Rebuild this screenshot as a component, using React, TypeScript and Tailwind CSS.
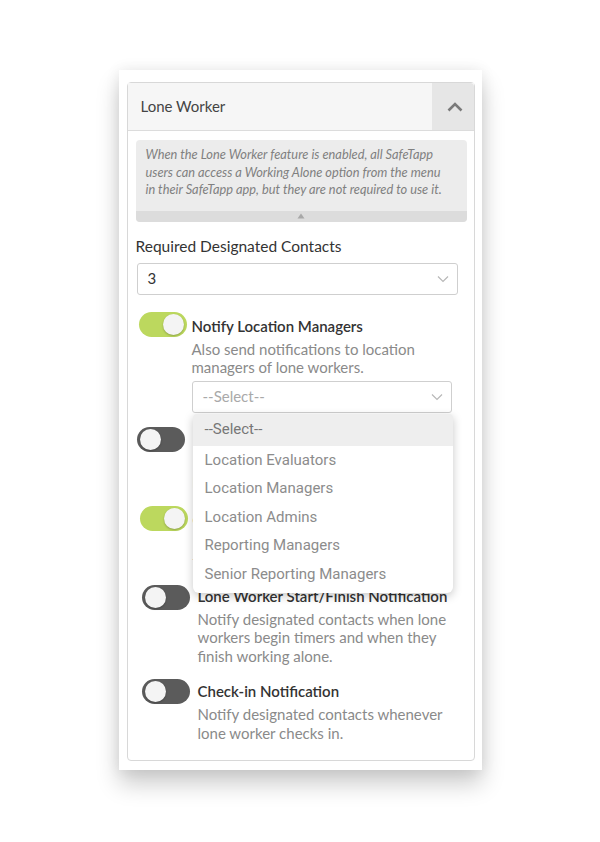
import React from 'react';

const sans = { fontFamily: 'Lato, "Open Sans", sans-serif' };

const Toggle = ({ on, className = '' }: { on: boolean; className?: string }) => (
  <div
    className={`relative h-[25px] w-[48px] shrink-0 rounded-full ${on ? 'bg-[#bcd85e]' : 'bg-[#5b5b5b]'} ${className}`}
  >
    <div
      className={`absolute top-[2px] h-[21px] w-[21px] rounded-full bg-[#f4f4f4] shadow-[0_1px_2px_rgba(0,0,0,0.25)] ${on ? 'right-[3px]' : 'left-[3px]'}`}
    />
  </div>
);

const Chevron = ({ className = '' }: { className?: string }) => (
  <svg viewBox="0 0 12 8" className={className} fill="none" stroke="currentColor" strokeWidth="1.2">
    <path d="M1 1.5l5 5 5-5" />
  </svg>
);

const SelectBox = ({ value, placeholder, className = '' }: { value?: string; placeholder?: string; className?: string }) => (
  <div className={`flex items-center justify-between rounded-[3px] border border-[#cfcfcf] bg-white ${className}`}>
    <span className={value ? 'text-[#333]' : 'text-[#a9a9a9]'}>{value ?? placeholder}</span>
    <Chevron className="h-[8px] w-[12px] text-[#b8b8b8]" />
  </div>
);

const options = [
  'Location Evaluators',
  'Location Managers',
  'Location Admins',
  'Reporting Managers',
  'Senior Reporting Managers',
];

interface RowProps {
  on: boolean;
  title: string;
  lines: string[];
  toggleClass: string;
  bodyClass?: string;
  children?: React.ReactNode;
}

const SettingRow = ({ on, title, lines, toggleClass, bodyClass = 'pt-[3px]', children }: RowProps) => (
  <div className="flex items-start">
    <Toggle on={on} className={toggleClass} />
    <div className={`flex-1 ${bodyClass}`}>
      <div className="text-[15px] font-semibold leading-[22px] text-[#333]">{title}</div>
      <div className="mt-[3px] text-[15px] leading-[18.5px] text-[#8a8a8a]">
        {lines.map((l, i) => (
          <div key={i}>{l}</div>
        ))}
      </div>
      {children}
    </div>
  </div>
);

export default function App() {
  return (
    <div className="flex min-h-screen justify-center bg-white pt-[70px]" style={sans}>
      <div className="h-fit w-[363px] bg-white pb-[9px] pl-2 pr-[7px] pt-3 shadow-[0_14px_22px_rgba(0,0,0,0.2),0_0_14px_rgba(0,0,0,0.08)]">
        <div className="rounded-[4px] border border-[#d8d8d8]">
          {/* panel header */}
          <div className="flex h-[48px] items-stretch border-b border-[#dcdcdc] bg-[#f6f6f6]">
            <div className="flex flex-1 items-center pl-[13px] text-[15px] text-[#444]">Lone Worker</div>
            <div className="flex w-[42px] items-center justify-center rounded-tr-[4px] bg-[#e6e6e6] pl-[4px]">
              <svg viewBox="0 0 16 10" className="h-[10px] w-[16px] text-[#7a7a7a]" fill="none" stroke="currentColor" strokeWidth="2.6">
                <path d="M1.5 8.5L8 2l6.5 6.5" />
              </svg>
            </div>
          </div>

          <div className="px-2 pb-[18px] pt-[9px]">
            {/* info note */}
            <div className="mr-[-1px] overflow-hidden rounded-[4px] bg-[#ececec]">
              <p className="px-[10px] pb-[12px] pt-[6px] text-[12.8px] italic leading-[17.5px] text-[#808080]">
                When the Lone Worker feature is enabled, all SafeTapp
                <br />
                users can access a Working Alone option from the menu
                <br />
                in their SafeTapp app, but they are not required to use it.
              </p>
              <div className="flex h-[11px] items-center justify-center bg-[#dcdcdc]">
                <svg viewBox="0 0 8 6" className="h-[6px] w-[8px] text-[#a8a8a8]">
                  <path d="M4 0.5L7.5 5.5H0.5z" fill="currentColor" />
                </svg>
              </div>
            </div>

            <div className="mt-[14px] text-[15.5px] leading-[20px] text-[#333]">Required Designated Contacts</div>
            <SelectBox value="3" className="ml-[1px] mt-[7px] h-[32px] w-[321px] pl-[10px] pr-[8px] text-[15px]" />

            <div className="mt-[17px] flex flex-col gap-[14px]">
              <SettingRow
                on
                title="Notify Location Managers"
                lines={['Also send notifications to location', 'managers of lone workers.']}
                toggleClass="ml-[3px] mr-[5px]"
              >
                <div className="relative mt-[4px]">
                  <SelectBox placeholder="--Select--" className="h-[32px] w-[260px] pl-[10px] pr-[8px] text-[15px]" />
                  {/* open option list */}
                  <div
                    className="absolute left-[1px] top-[33px] z-10 w-[260px] overflow-hidden rounded-b-[6px] rounded-t-[3px] bg-white pb-[5px] text-[15px] shadow-[0_3px_10px_rgba(0,0,0,0.22)]"
                    style={{ fontFamily: 'Roboto, sans-serif' }}
                  >
                    <div className="flex h-[32px] items-center bg-[#eeeeee] pl-[12px] text-[#777]">--Select--</div>
                    {options.map((o) => (
                      <div key={o} className="flex h-[28.5px] items-center pl-[12px] text-[#8c8c8c]">
                        {o}
                      </div>
                    ))}
                  </div>
                </div>
              </SettingRow>

              <SettingRow
                on={false}
                title="Missed Check-in Notification"
                lines={['Notify designated contacts when a', 'lone worker misses a check-in.']}
                toggleClass="ml-[1px] mr-[8px]"
              />

              <SettingRow
                on
                title="Overdue Timer Notification"
                lines={['Notify designated contacts when a', 'timer runs out.']}
                toggleClass="ml-[4px] mr-[5px]"
              />

              <SettingRow
                on={false}
                title="Lone Worker Start/Finish Notification"
                lines={['Notify designated contacts when lone', 'workers begin timers and when they', 'finish working alone.']}
                toggleClass="ml-[6px] mr-[8px]"
                bodyClass="pt-0"
              />

              <SettingRow
                on={false}
                title="Check-in Notification"
                lines={['Notify designated contacts whenever', 'lone worker checks in.']}
                toggleClass="ml-[6px] mr-[8px]"
                bodyClass="pt-[1px]"
              />
            </div>
          </div>
        </div>
      </div>
    </div>
  );
}
